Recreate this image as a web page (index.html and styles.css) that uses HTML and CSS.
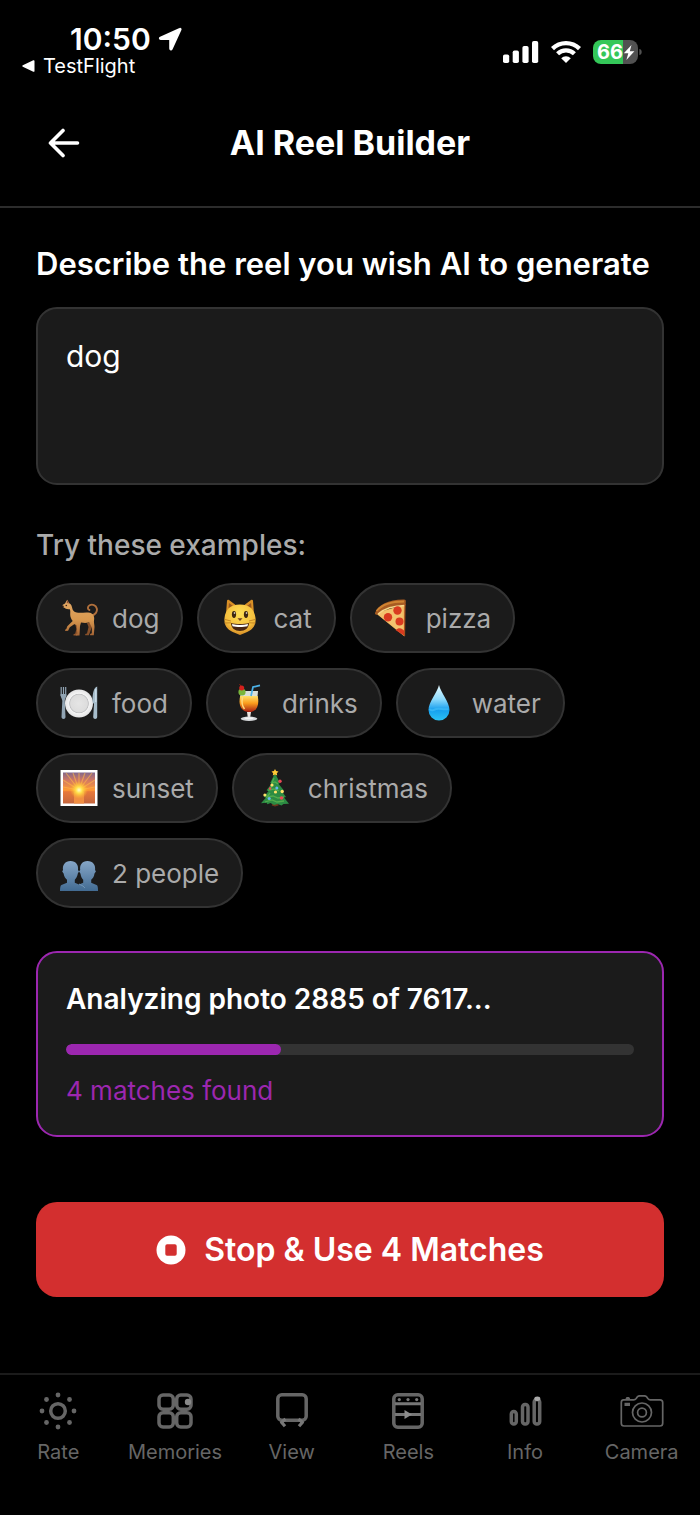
FILE: index.html
```html
<!DOCTYPE html>
<html lang="en">
<head>
<meta charset="utf-8">
<meta name="viewport" content="width=device-width, initial-scale=1">
<title>AI Reel Builder</title>
<link rel="stylesheet" href="styles.css">
</head>
<body>
<div class="status-bar">
  <div class="status-left">
    <div class="clock">
      <span>10:50</span>
      <svg class="location-icon" viewBox="0 0 24 24" aria-hidden="true"><path d="M21.800 1.800 2.400 10.500c-1 .5-.8 1.500.2 1.500h9.500v9.600c0 1.200 1.200 1.400 1.700.3L22.600 2.600c.3-.7-.2-1.100-.8-.8Z" fill="#fff" stroke="#fff" stroke-width="1.800" stroke-linejoin="round"/></svg>
    </div>
    <a class="return-link" href="#testflight">
      <svg class="return-icon" viewBox="0 0 13 12" aria-hidden="true"><path d="M12.500 1v10c0 .8-.6 1-1.200.7L.8 6.800C.2 6.500.2 5.500.8 5.200L11.300.3c.6-.3 1.200-.1 1.200.7Z" fill="#fff"/></svg>
      <span>TestFlight</span>
    </a>
  </div>
  <div class="status-right">
    <svg class="signal-icon" viewBox="0 0 36 24" aria-hidden="true" fill="#fff"><rect x="0" y="14.500" width="6.200" height="8.500" rx="1.800"/><rect x="9.700" y="10.500" width="6.200" height="12.500" rx="1.800"/><rect x="19.400" y="6" width="6.200" height="17" rx="1.800"/><rect x="29" y="1" width="6.200" height="22" rx="1.800"/></svg>
    <svg class="wifi-icon" viewBox="0 0 30 24" aria-hidden="true"><g fill="none" stroke="#fff" stroke-width="4.300"><path d="M1.500 8.600a19.200 19.200 0 0 1 27 0"/><path d="M6.600 13.800a12 12 0 0 1 16.800 0"/></g><path d="M15 23 10.200 18.200a6.800 6.800 0 0 1 9.600 0Z" fill="#fff"/></svg>
    <div class="battery">
      <svg class="battery-body" viewBox="0 0 49 24" aria-hidden="true"><path d="M8 0h22v24H8a8 8 0 0 1-8-8V8a8 8 0 0 1 8-8Z" fill="#34c759"/><path d="M30 0h7a8 8 0 0 1 8 8v8a8 8 0 0 1-8 8h-7Z" fill="#515151"/><path d="M46.300 9c3.200 0 3.200 6 0 6Z" fill="#515151"/><path d="M38.500 5 30.800 13.200h4.500L33.400 20l8-8.700h-4.600Z" fill="#fff"/></svg>
      <span class="battery-level">66</span>
    </div>
  </div>
</div>

<header class="header">
  <button class="back" type="button" aria-label="Back">
    <svg viewBox="0 0 32 30" aria-hidden="true"><path d="M15 2.500 2.500 15 15 27.500M3 15h26.500" fill="none" stroke="#fff" stroke-width="3.600" stroke-linecap="round" stroke-linejoin="round"/></svg>
  </button>
  <h1 class="title">AI Reel Builder</h1>
</header>

<main class="content">
  <label class="prompt-label" for="prompt">Describe the reel you wish AI to generate</label>
  <textarea class="prompt" id="prompt" rows="3">dog</textarea>

  <h2 class="examples-title">Try these examples:</h2>
  <div class="chips">
    <button class="chip" type="button">
      <svg viewBox="0 0 38 38" aria-hidden="true"><defs><linearGradient id="fur" x1="0" y1="0" x2="0" y2="1"><stop offset="0" stop-color="#e0a766"/><stop offset=".55" stop-color="#d9994f"/><stop offset="1" stop-color="#a56434"/></linearGradient></defs><path d="M31.500 16.500c4-.8 6-4 5.300-7-.8-3.500-4.600-4.700-7.200-3.200-2.200 1.300-2.300 4.200-.2 4.700" fill="none" stroke="#b0703c" stroke-width="1.900" stroke-linecap="round"/><path d="M27 24l1.500 4-1.500 6.500-1.800.4v1.300h3.600L32 28l-1-5Z" fill="#87502a"/><path d="M12.500 24.500 15.500 26l.8 4-1 4.500-1.800.7v1.300h3.800L19 27Z" fill="#8d532b"/><path d="m7.200.8 2 3.400c1.800.8 2.600 2.500 3 4.800.5 2.600 1.800 4 4.500 4.500 4.500.8 9-.8 13.300.3 3.500 1 4.800 4.200 4 7.700-.4 2 .6 4.500.5 6.500l-.7 8.300h-3.700v-1.200l1.700-.8.1-5.500-2.700-5.600c-3 1-5 .8-8.200.3l-1 3.500-.5 9.500h-3.700v-1.200l1.500-.7-.6-8-2.200-1.600-4.700 3.300-1.700 3.400-2.800.3c-.4-1 .1-1.700 1-2l1-2.800 5.400-5.200c-1.600-2-2.500-4.200-2.500-6.500 0-2 .4-3.400-.4-5.300-1.900 0-3.600-.2-5.100-1.300-1-.5-2.200-.6-2.300-1.900l.4-1.300L5 4.500Z" fill="url(#fur)"/><path d="m6.700 4 .5-3.200L9 4.500Z" fill="#8e4d32"/><circle cx="2.800" cy="7.600" r="1" fill="#2c1c18"/><circle cx="6.300" cy="6.500" r=".8" fill="#3b2115"/></svg>
      <span>dog</span>
    </button>
    <button class="chip" type="button">
      <svg viewBox="0 0 38 38" aria-hidden="true"><defs><radialGradient id="cat" cx=".5" cy=".3" r=".7"><stop offset="0" stop-color="#fedf55"/><stop offset=".7" stop-color="#f4bd3c"/><stop offset="1" stop-color="#d58b26"/></radialGradient></defs><path d="M5 15 6 1.700c.2-1.200 1.300-1.200 2-.6L16 7ZM33 15 32 1.700c-.2-1.200-1.300-1.200-2-.6L22 7Z" fill="#d88f26"/><path d="M7.500 9 8 4l4 3ZM30.500 9 30 4l-4 3Z" fill="#9a5a20"/><path d="M19 5.500C9 5.500 4.500 11 3.500 19 2.500 28 8 31.500 13 33.500l6 2.500 6-2.500c5-2 10.500-5.500 9.500-14.500-1-8-5.500-13.500-15.500-13.500Z" fill="url(#cat)"/><ellipse cx="13" cy="15.500" rx="2.100" ry="3.400" fill="#3f2711"/><ellipse cx="25" cy="15.500" rx="2.100" ry="3.400" fill="#3f2711"/><circle cx="13.500" cy="14" r=".8" fill="#fff"/><circle cx="25.500" cy="14" r=".8" fill="#fff"/><path d="M16.500 19.200h5L19 22Z" fill="#73411f"/><path d="M10 24c5 1.300 13 1.300 18 0 0 5-4 8-9 8s-9-3-9-8Z" fill="#472613"/><path d="M11 25c5 1.200 11 1.200 16 0l-.5 2.200c-4 1-11 1-15 0Z" fill="#fff"/><path d="M4 20.500 10 22M3.500 24l6.500-.2M34 20.500 28 22M34.500 24l-6.500-.2" stroke="#b9791f" stroke-width=".8"/></svg>
      <span>cat</span>
    </button>
    <button class="chip" type="button">
      <svg viewBox="0 0 38 38" aria-hidden="true"><path d="M1.500 14 31 5.500 30.500 37.500Z" fill="#efb75c"/><path d="M3 14.500 28.500 6.500 29 35.500Z" fill="#f3c36e"/><path d="M1 14C4 6 15 .2 30 .5c1.500 0 2 .8 1.800 2.500l-.3 3.500C20 6 10 9 3.500 15.500 2 16 .8 15.500 1 14Z" fill="#a75b22"/><path d="M2.500 12C8 5.500 17 2.500 30 2.500" fill="none" stroke="#cf8432" stroke-width="1.800"/><path d="M4 15c7-6 15-8.300 26.800-8.500" fill="none" stroke="#f9d78a" stroke-width="1.300"/><g fill="#d93b20"><circle cx="23.500" cy="11.500" r="4.200"/><circle cx="14" cy="18.300" r="4.200"/><circle cx="25.500" cy="22.500" r="4"/><path d="m21.500 31 2.500-1.600c3-1 5 1 6.300 2.600v4.700Z"/></g><path d="M31 5 30.500 37" stroke="#a94e1c" stroke-width="1.200"/></svg>
      <span>pizza</span>
    </button>
    <button class="chip" type="button">
      <svg viewBox="0 0 38 38" aria-hidden="true"><defs><radialGradient id="plate"><stop offset="0" stop-color="#e5e5e5"/><stop offset=".6" stop-color="#ddd"/><stop offset=".67" stop-color="#bfc0c2"/><stop offset=".72" stop-color="#f4f4f4"/><stop offset="1" stop-color="#e3e3e4"/></radialGradient></defs><circle cx="19" cy="19.500" r="14" fill="url(#plate)"/><path d="M1.200 3v9M3.500 3v9M5.700 3v9" stroke="#92a5b5" stroke-width="1.200"/><path d="M.6 10h5.700c.2 4-1.500 4.500-1.500 7L5.500 33c0 2.500-4 2.500-4 0L2.300 17C2.300 14.500.5 14 .6 10Z" fill="#91a4b3"/><path d="M37.200 2.500C33 4 32.500 11 32.500 18l1.500 2-.8 13c0 2.500 4 2.500 4 0Z" fill="#a7bdcb"/><path d="M35.800 5v13" stroke="#d8e8f2" stroke-width="1"/></svg>
      <span>food</span>
    </button>
    <button class="chip" type="button">
      <svg viewBox="0 0 38 38" aria-hidden="true"><defs><linearGradient id="drink" x1="0" y1="0" x2="0" y2="1"><stop offset="0" stop-color="#ffe06b"/><stop offset=".45" stop-color="#fa9d1d"/><stop offset="1" stop-color="#a61e13"/></linearGradient></defs><path d="M10 7h18l-.7 8H10.500Z" fill="#d9dfd8"/><path d="M10.200 12h17.500c2 9-1 16-8.700 16s-11-7-8.800-16Z" fill="url(#drink)"/><path d="M12.500 13c-1 5-.5 9 2 12" fill="none" stroke="#ffd97a" stroke-width="1.500"/><path d="m21 12 2-9 7-1.700" fill="none" stroke="#4cb2e8" stroke-width="1.700"/><circle cx="12" cy="8" r="3.600" fill="#79b53b"/><circle cx="11.700" cy="4" r="2.500" fill="#d4201c"/><path d="m11 2-1.500-1.800" stroke="#9e2116" stroke-width="1"/><path d="M17 28h4l-.9 6h-2.200Z" fill="#ece4df"/><ellipse cx="19" cy="34.700" rx="8.300" ry="2.200" fill="#d6d8da"/><ellipse cx="19" cy="34.200" rx="4.500" ry="1" fill="#f4f4f4"/></svg>
      <span>drinks</span>
    </button>
    <button class="chip" type="button">
      <svg viewBox="0 0 38 38" aria-hidden="true"><defs><linearGradient id="water" x1="0" y1="0" x2="0" y2="1"><stop offset="0" stop-color="#e8faff"/><stop offset=".4" stop-color="#8cdafc"/><stop offset=".7" stop-color="#159eee"/><stop offset="1" stop-color="#2cc3f5"/></linearGradient></defs><path d="M19 1c1.500 7 10.500 17 10.500 25a10.500 10.500 0 0 1-21 0C8.500 18 17.500 8 19 1Z" fill="url(#water)"/><path d="M9.500 25c2 3 4 .5 7 0 4-.7 7 1 12 0" fill="none" stroke="#36b5f5" stroke-width="2"/></svg>
      <span>water</span>
    </button>
    <button class="chip" type="button">
      <svg viewBox="0 0 38 38" aria-hidden="true"><defs><linearGradient id="sky" x1="0" y1="0" x2="0" y2="1"><stop offset="0" stop-color="#81678c"/><stop offset=".25" stop-color="#d17864"/><stop offset=".57" stop-color="#ff9b35"/><stop offset=".62" stop-color="#e8793a"/><stop offset="1" stop-color="#c4663e"/></linearGradient><radialGradient id="sun"><stop offset="0" stop-color="#fffbd0"/><stop offset=".35" stop-color="#ffe24b"/><stop offset="1" stop-color="#ffb52d" stop-opacity="0"/></radialGradient></defs><path d="M.5 1h37v36H.5Z" fill="#fff"/><path d="M3 3.500h32v31H3Z" fill="url(#sky)"/><path d="m19 21-16-3M19 21 3 11M19 21 6 4M19 21 13 4M19 21V4M19 21 25 4M19 21 32 4M19 21 35 11M19 21l16-3" stroke="#ffb848" stroke-width="1.200" opacity=".6"/><path d="M14 23h10v11.500H14Z" fill="#f18f42"/><circle cx="19" cy="21" r="9" fill="url(#sun)"/></svg>
      <span>sunset</span>
    </button>
    <button class="chip" type="button">
      <svg viewBox="0 0 38 38" aria-hidden="true"><path d="M17 32h4.500l1 4.500-3.500 1-3.300-1Z" fill="#6a351b"/><path d="M19 4 24 14l-1.500.8 5 6.200-2 .8L30 28l-2 .4 5 6.300-5.500.3-2 1.500-4-1.500-3.500 1-3.500-2-3 1.300-1-1.600-5.500.5L10 28.500 7.800 28l4.700-6-2-.7 5-6.500-1.300-.8Z" fill="#2c8b43"/><path d="m18 9-2 5 3-1 3 2M16 17l-3 4 5-1 5 2M14 24l-3 4 6-1 5 2 6-1M9 33l7-2 5 2 7-1" fill="none" stroke="#52ad4d" stroke-width="1.300"/><path d="m19 0 1.100 2.100 2.400.4-1.700 1.700.4 2.400L19 5.500l-2.200 1.100.4-2.400-1.700-1.700 2.400-.4Z" fill="#ffc936"/><g fill="#e94855"><circle cx="24" cy="12.200" r="1.700"/><circle cx="25.500" cy="29" r="1.800"/><circle cx="14" cy="19.500" r="1.200"/></g><g fill="#ffe269"><circle cx="16" cy="16" r="1.600"/><circle cx="26.200" cy="22.500" r="1.700"/><circle cx="19.500" cy="23" r="1.600"/><circle cx="8.900" cy="26" r="1.600"/></g><g fill="#67b7ef"><circle cx="20.800" cy="19" r="1.500"/><circle cx="13.200" cy="29.500" r="1.600"/></g></svg>
      <span>christmas</span>
    </button>
    <button class="chip" type="button">
      <svg viewBox="0 0 38 38" aria-hidden="true"><defs><linearGradient id="bust" x1="0" y1="0" x2="0" y2="1"><stop offset="0" stop-color="#86a6c7"/><stop offset="1" stop-color="#426b92"/></linearGradient></defs><path d="M10.500 7C5 7 2.300 11 3 16l-.8 1.500 1.400 2c.5 3.200 1.600 4.700 3.400 6.300v3L1.500 31c-1 .5-1.500 2-1.500 6h38c0-4-.3-5.500-1.500-6l-5.300-2.200v-3c1.800-1.600 2.900-3.100 3.300-6.300l1.400-2-.8-1.500C35.800 11 33 7 27.500 7s-8 4-7.300 9L19 17.500 18 16c.7-5-2-9-7.500-9Z" fill="url(#bust)"/><path d="m17.800 19.500-.3 1.500c-.7 2.500-1.500 3.500-2.700 4.700v3l4.200 1.800 4.200-1.800v-3C22 24.500 21 23 20.400 19.500L19 17.500Z" fill="#1b1b1b"/><path d="m19 30 4 2 2 2" fill="none" stroke="#7094b4" stroke-width="1"/></svg>
      <span>2 people</span>
    </button>
  </div>

  <section class="progress-card">
    <label class="progress-label" for="analysis">Analyzing photo 2885 of 7617...</label>
    <progress class="progress" id="analysis" value="2885" max="7617"></progress>
    <p class="matches">4 matches found</p>
  </section>

  <button class="stop" type="button">
    <svg viewBox="0 0 30 30" aria-hidden="true"><circle cx="15" cy="15" r="14.500" fill="#fff"/><rect x="9.300" y="9.300" width="11.400" height="11.400" rx="1.800" fill="#d32f2f"/></svg>
    <span>Stop &amp; Use 4 Matches</span>
  </button>
</main>

<nav class="tabs" aria-label="Main">
  <a class="tab" href="#rate">
    <svg viewBox="0 0 44 40" aria-hidden="true" fill="#666"><circle cx="22" cy="20" r="7.300" fill="none" stroke="#666" stroke-width="3.500"/><circle cx="22" cy="4" r="2.400"/><circle cx="22" cy="36" r="2.400"/><circle cx="6" cy="20" r="2.400"/><circle cx="38" cy="20" r="2.400"/><circle cx="10.500" cy="8.500" r="2.400"/><circle cx="33.500" cy="8.500" r="2.400"/><circle cx="10.500" cy="31.500" r="2.400"/><circle cx="33.500" cy="31.500" r="2.400"/></svg>
    <span>Rate</span>
  </a>
  <a class="tab" href="#memories">
    <svg viewBox="0 0 44 40" aria-hidden="true"><g fill="none" stroke="#666" stroke-width="3.500"><rect x="6" y="4" width="14.300" height="14.300" rx="4"/><rect x="23.700" y="4" width="14.300" height="14.300" rx="4"/><rect x="6" y="21.700" width="14.300" height="14.300" rx="4"/><rect x="23.700" y="21.700" width="14.300" height="14.300" rx="4"/></g><circle cx="35" cy="11" r="3.200" fill="#888"/></svg>
    <span>Memories</span>
  </a>
  <a class="tab" href="#view">
    <svg viewBox="0 0 44 40" aria-hidden="true"><rect x="7.800" y="3.800" width="28.400" height="25.400" rx="4" fill="none" stroke="#666" stroke-width="3.500"/><path d="m15.500 28-4 3.200 3.500 4M28.500 28l4 3.200-3.500 4" fill="none" stroke="#777" stroke-width="3.200" stroke-linejoin="round"/></svg>
    <span>View</span>
  </a>
  <a class="tab" href="#reels">
    <svg viewBox="0 0 44 40" aria-hidden="true"><g fill="none" stroke="#666" stroke-width="3.500"><rect x="7.800" y="3.800" width="28.400" height="32.400" rx="4"/><path d="M9 12.700h26M9 23.500h26" stroke="#777" stroke-width="3"/></g><g fill="#777"><circle cx="13.300" cy="8.600" r="1.600"/><circle cx="22" cy="8.600" r="1.600"/><circle cx="30.700" cy="8.600" r="1.600"/><path d="m18.500 19 7.500 4.500-7.500 4.500Z" fill="#8c8c8c"/></g></svg>
    <span>Reels</span>
  </a>
  <a class="tab" href="#info">
    <svg viewBox="0 0 44 40" aria-hidden="true"><g fill="none" stroke="#666" stroke-width="3.500"><rect x="8.300" y="20.500" width="5" height="12.500" rx="2.500"/><rect x="19.500" y="13.500" width="5.500" height="19.500" rx="2.500"/><rect x="31.200" y="8.500" width="5.500" height="24.500" rx="2.500"/></g><ellipse cx="34.300" cy="7.700" rx="3" ry="2.200" fill="#aaa"/></svg>
    <span>Info</span>
  </a>
  <a class="tab" href="#camera">
    <svg viewBox="0 0 44 40" aria-hidden="true"><g fill="none" stroke="#666" stroke-width="1.700"><path d="M3.500 8.800h10.200c1.200 0 1.800-.4 2.500-1.300l1.200-1.700c.7-.8 1.200-1 2.300-1h4.600c1.100 0 1.600.2 2.300 1l1.200 1.700c.7.900 1.300 1.300 2.500 1.300H40c1.800 0 2.700.9 2.700 2.700v20.800c0 1.800-.9 2.700-2.700 2.700H4c-1.800 0-2.700-.9-2.700-2.700V11.500c0-1.800.6-2.700 2.200-2.700Z"/><circle cx="22" cy="21.500" r="9.500"/><circle cx="22" cy="21.500" r="4.400"/></g><path d="M5.500 8.500c.2-2 .8-2.400 2.300-2.400s2.200.4 2.400 2.400ZM4.500 11.700H10V15H4.500Z" fill="#666"/></svg>
    <span>Camera</span>
  </a>
</nav>
</body>
</html>
```
FILE: styles.css
```css
* {
  box-sizing: border-box;
}

body {
  margin: 0;
  min-height: 100vh;
  display: flex;
  flex-direction: column;
  background: #000;
  color: #fff;
  font-family: Inter, "Liberation Sans", sans-serif;
}

button,
textarea {
  font: inherit;
  color: inherit;
}

h1,
h2,
p {
  margin: 0;
}

svg {
  display: block;
  flex: none;
}

.status-bar {
  display: flex;
  justify-content: space-between;
  padding: 22px 58px 0 22px;
}

.status-left {
  display: flex;
  flex-direction: column;
}

.clock {
  display: flex;
  align-items: center;
  gap: 7px;
  padding-left: 48px;
  font-size: 30px;
  font-weight: 600;
  line-height: 34px;
}

.location-icon {
  width: 24px;
  height: 24px;
}

.return-link {
  display: flex;
  align-items: center;
  gap: 8px;
  color: #fff;
  font-size: 20px;
  line-height: 20px;
  text-decoration: none;
}

.return-icon {
  width: 13px;
  height: 12px;
}

.status-right {
  display: flex;
  align-items: center;
  gap: 12px;
  height: 60px;
}

.signal-icon {
  width: 36px;
  height: 24px;
}

.wifi-icon {
  width: 30px;
  height: 24px;
}

.battery {
  display: grid;
  align-items: center;
}

.battery-body,
.battery-level {
  grid-area: 1 / 1;
}

.battery-body {
  width: 49px;
  height: 24px;
}

.battery-level {
  padding-left: 4px;
  font-size: 20px;
  font-weight: 700;
  line-height: 24px;
}

.header {
  display: grid;
  grid-template-columns: 56px 1fr 56px;
  align-items: center;
  height: 126px;
  padding: 0 36px 2px;
  border-bottom: 2px solid #2c2c2c;
}

.back {
  display: grid;
  place-items: center;
  width: 56px;
  height: 56px;
  padding: 0;
  border: 0;
  background: none;
}

.back svg {
  width: 32px;
  height: 30px;
}

.title {
  font-size: 34px;
  font-weight: 700;
  line-height: 44px;
  text-align: center;
}

.content {
  display: flex;
  flex-direction: column;
  padding: 36px 36px 76px;
}

.prompt-label {
  font-size: 31px;
  font-weight: 600;
  line-height: 40px;
}

.prompt {
  display: block;
  width: 100%;
  margin-top: 23px;
  padding: 27px 28px;
  border: 2px solid #333;
  border-radius: 21px;
  background: #1b1b1b;
  font-size: 30px;
  line-height: 40px;
  outline: 0;
  resize: none;
}

.examples-title {
  margin-top: 42px;
  color: #aaa;
  font-size: 28px;
  font-weight: 500;
  line-height: 36px;
}

.chips {
  display: flex;
  flex-wrap: wrap;
  gap: 15px 14px;
  margin-top: 20px;
}

.chip {
  display: flex;
  align-items: center;
  gap: 14px;
  height: 70px;
  padding: 0 22px;
  border: 2px solid #333;
  border-radius: 35px;
  background: #1b1b1b;
  color: #aaa;
  font-size: 26px;
}

.chip svg {
  width: 38px;
  height: 38px;
}

.progress-card {
  display: flex;
  flex-direction: column;
  margin-top: 43px;
  padding: 28px;
  border: 2px solid #9c27b0;
  border-radius: 21px;
  background: #1b1b1b;
}

.progress-label {
  font-size: 28px;
  font-weight: 600;
  line-height: 36px;
}

.progress {
  appearance: none;
  width: 100%;
  height: 11px;
  margin-top: 27px;
  border: 0;
  border-radius: 6px;
  background: #333;
  overflow: hidden;
}

.progress::-webkit-progress-bar {
  background: #333;
}

.progress::-webkit-progress-value {
  border-radius: 6px;
  background: #9c27b0;
}

.matches {
  margin-top: 20px;
  color: #9c27b0;
  font-size: 26px;
  line-height: 32px;
}

.stop {
  display: flex;
  align-items: center;
  justify-content: center;
  gap: 18px;
  height: 95px;
  margin-top: 65px;
  border: 0;
  border-radius: 21px;
  background: #d32f2f;
  font-size: 32px;
  font-weight: 600;
}

.stop svg {
  width: 30px;
  height: 30px;
}

.tabs {
  display: grid;
  grid-template-columns: repeat(6, 1fr);
  margin-top: auto;
  padding: 16px 0 50px;
  border-top: 2px solid #1b1b1b;
}

.tab {
  display: flex;
  flex-direction: column;
  align-items: center;
  gap: 8px;
  color: #666;
  font-size: 20px;
  font-weight: 400;
  line-height: 26px;
  text-decoration: none;
}

.tab svg {
  width: 44px;
  height: 40px;
}
```
